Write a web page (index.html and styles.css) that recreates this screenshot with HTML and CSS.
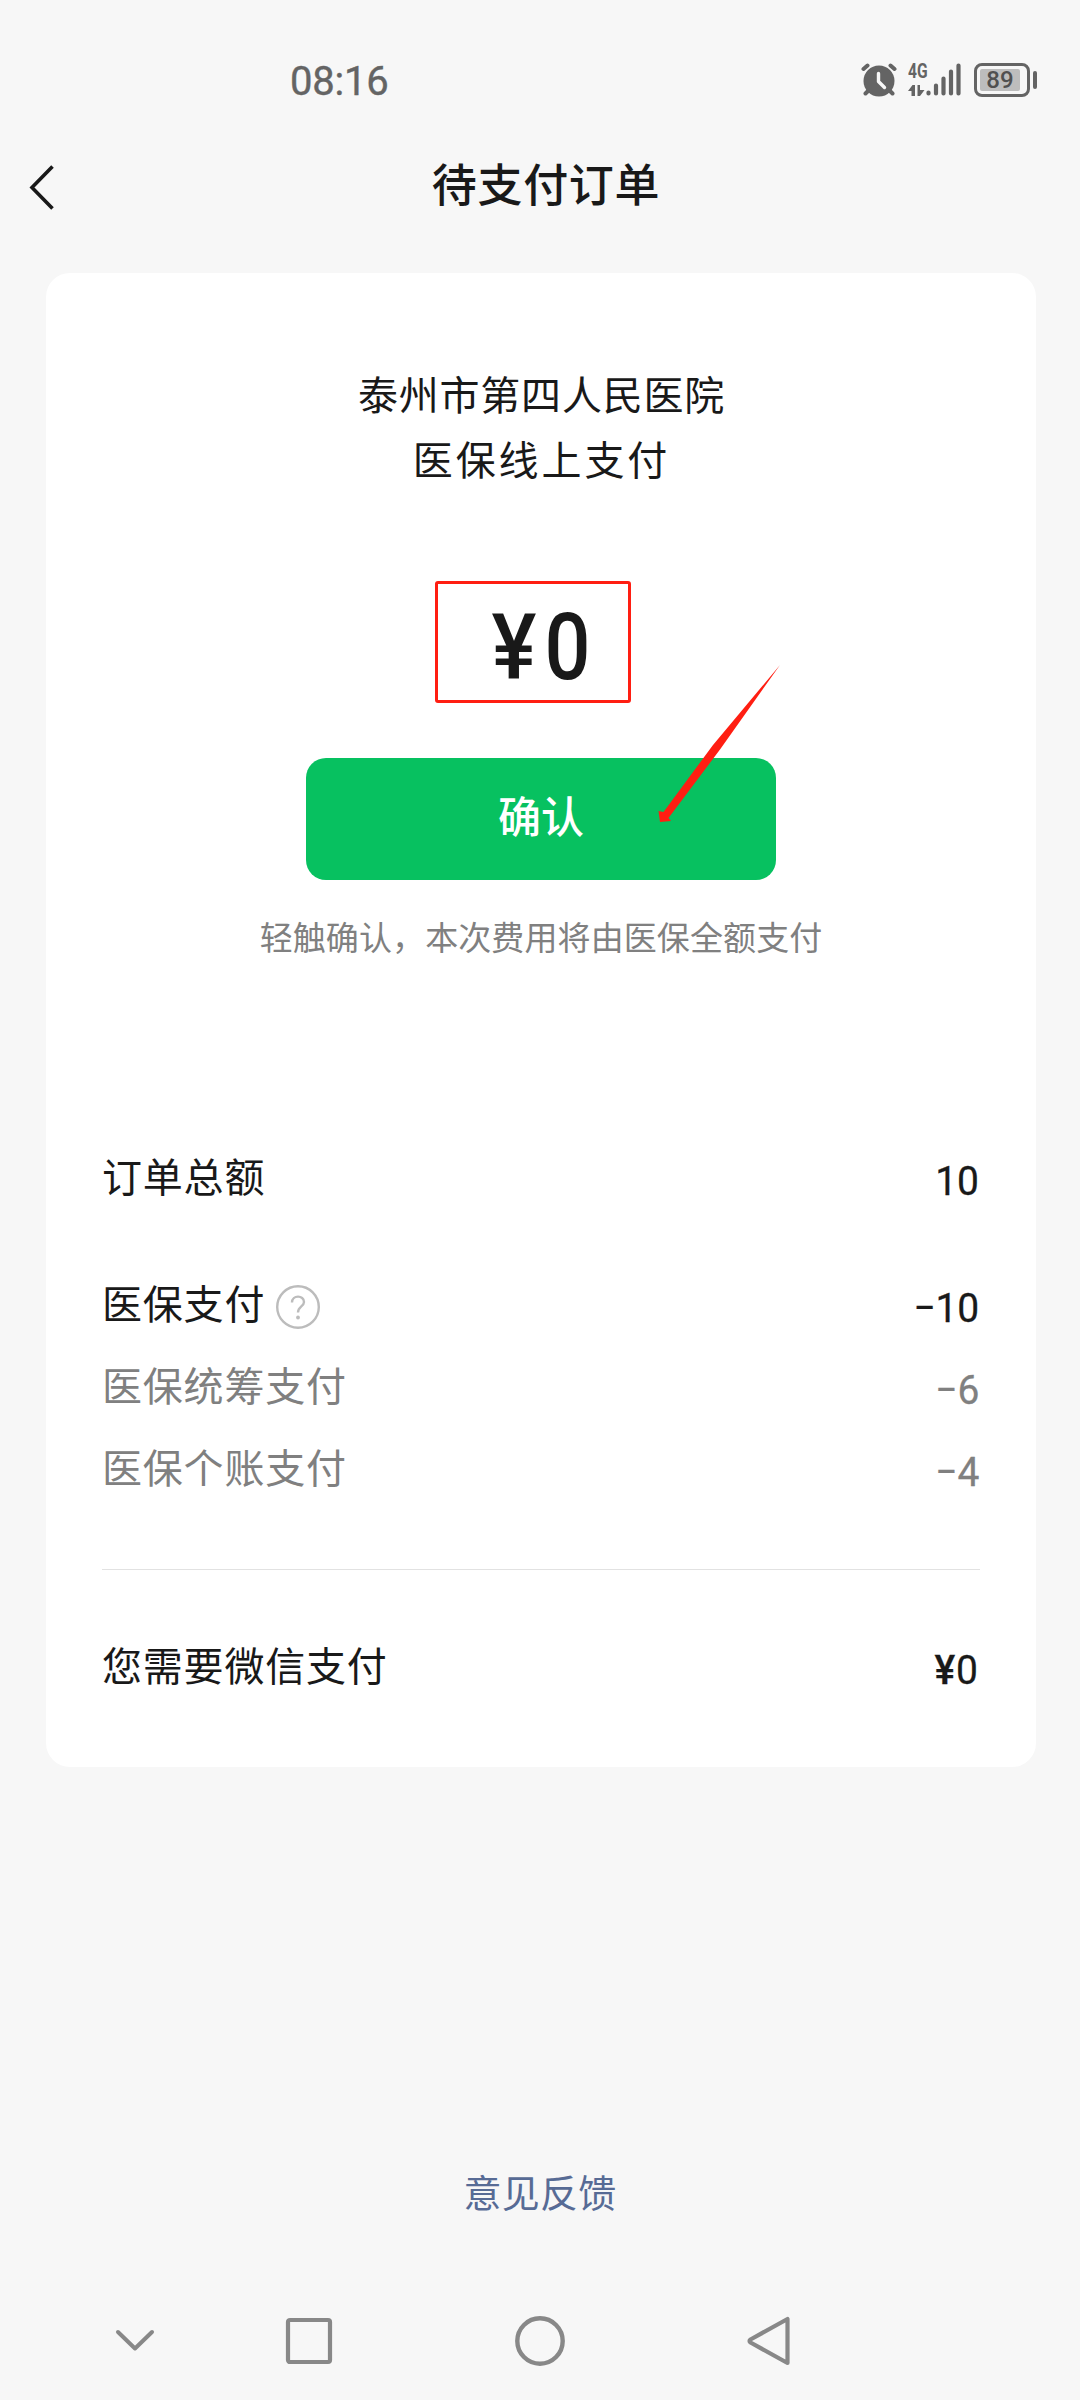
FILE: index.html
```html
<!DOCTYPE html>
<html lang="zh-CN">
<head>
<meta charset="utf-8">
<title>待支付订单</title>
<link rel="stylesheet" href="styles.css">
</head>
<body>
<div class="screen">
  <div class="statusbar">
    <span class="clock">08:16</span>
    <div class="indicators">
      <svg class="alarm" width="36" height="34" viewBox="0 0 36 34">
        <g fill="none" stroke="#646464" stroke-width="4" stroke-linecap="round">
          <path d="M2.500 6 L6.500 2.500M33.500 6 L29.500 2.500M8 27 L4.500 30.500M28 27 L31.500 30.500"/>
        </g>
        <circle cx="18" cy="18" r="15.500" fill="#646464"/>
        <path d="M17.500 10.500 V18.500 L23.500 24.500" fill="none" stroke="#f7f7f7" stroke-width="3.400" stroke-linecap="round" stroke-linejoin="round"/>
      </svg>
      <div class="network">
        <span class="network-type">4G</span>
        <svg width="53" height="34" viewBox="0 0 53 34">
          <g fill="none" stroke="#646464" stroke-width="4.200" stroke-linecap="round">
            <path d="M20.500 29.500V30.500M28 22.500V30.500M35.500 15.500V30.500M43 8.500V30.500M50.500 2.500V30.500"/>
          </g>
          <path d="M0 28 L4.500 22 H7 V33 H3.500 V28Z M9.500 22 H12 V27 H16.500 L12 33 H9.500Z" fill="#646464"/>
        </svg>
      </div>
      <div class="battery"><span class="battery-level">89</span></div>
      <span class="battery-tip"></span>
    </div>
  </div>

  <header class="header">
    <svg class="back" width="28" height="48" viewBox="0 0 28 48">
      <path d="M24.500 3.500 L4 24.500 L24.500 45.500" fill="none" stroke="#191919" stroke-width="3.600"/>
    </svg>
    <h1 class="title">待支付订单</h1>
  </header>

  <main class="card">
    <div class="merchant">泰州市第四人民医院</div>
    <div class="merchant merchant-wide">医保线上支付</div>
    <div class="amount"><span class="yen">¥</span><span class="digits">0</span></div>
    <button class="confirm">确认</button>
    <p class="hint">轻触确认，本次费用将由医保全额支付</p>

    <div class="row row-total"><span>订单总额</span><span class="value">10</span></div>
    <div class="row row-insurance">
      <span class="label">医保支付
        <svg class="help" width="44" height="44" viewBox="0 0 44 44">
          <circle cx="22" cy="22" r="20.800" fill="none" stroke="#bcbcbc" stroke-width="2.400"/>
          <path d="M16 17.500 C16 9.800 28 9.800 28 17 C28 21.500 22 21.500 22 27.500" fill="none" stroke="#bcbcbc" stroke-width="2.400"/>
          <circle cx="22" cy="32.500" r="1.900" fill="#bcbcbc"/>
        </svg>
      </span>
      <span class="value">−10</span>
    </div>
    <div class="row row-sub"><span>医保统筹支付</span><span class="value">−6</span></div>
    <div class="row row-sub"><span>医保个账支付</span><span class="value">−4</span></div>
    <hr class="divider">
    <div class="row row-due"><span>您需要微信支付</span><span class="value value-due"><b>¥</b>0</span></div>
  </main>

  <a class="feedback">意见反馈</a>

  <nav class="navbar">
    <svg width="44" height="56" viewBox="0 0 44 56"><path d="M5 19 L22 35.500 L39 19" fill="none" stroke="#888" stroke-width="4" stroke-linecap="round" stroke-linejoin="round"/></svg>
    <svg width="56" height="56" viewBox="0 0 56 56"><rect x="7" y="7" width="42" height="42" rx="2" fill="none" stroke="#888" stroke-width="4.200"/></svg>
    <svg width="56" height="56" viewBox="0 0 56 56"><circle cx="28" cy="28" r="22.700" fill="none" stroke="#888" stroke-width="4.400"/></svg>
    <svg width="56" height="56" viewBox="0 0 56 56"><path d="M45.500 6 V50 L8.500 29.500 Q6.500 28 8.500 26.500 Z" fill="none" stroke="#888" stroke-width="4.200" stroke-linejoin="round"/></svg>
  </nav>

  <div class="mark-box"></div>
  <svg class="mark-arrow" width="126" height="160" viewBox="0 0 126 160">
    <path d="M122 1 L55 81 L5.500 148 L0.500 147 L2 158 L13 157 L10.500 154 L62 85.500 Z" fill="#ff1e12"/>
  </svg>
</div>
</body>
</html>
```
FILE: styles.css
```css
* { box-sizing: border-box; }

body {
  margin: 0;
  background: #f7f7f7;
  color: #191919;
  font-family: Roboto, "Noto Sans CJK SC", sans-serif;
}

.screen {
  position: relative;
  width: 1080px;
  height: 2400px;
  display: flex;
  flex-direction: column;
}

.statusbar {
  height: 160px;
  padding: 0 43px 0 290px;
  display: flex;
  align-items: center;
  justify-content: space-between;
  color: #646464;
}
.clock { padding-top: 4px; font-size: 40px; line-height: 48px; letter-spacing: -.2px; -webkit-text-stroke: .4px #646464; }
.indicators { display: flex; align-items: center; }
.network { position: relative; height: 34px; margin: 0 13px 0 11px; }
.network svg { display: block; }
.network-type {
  position: absolute;
  left: 0;
  top: -2px;
  font-size: 20px;
  font-weight: 700;
  line-height: 20px;
  transform: scaleX(.78);
  transform-origin: left;
}
.battery {
  width: 56px;
  height: 34px;
  padding: 3px;
  border: 3.500px solid #646464;
  border-radius: 8px;
}
.battery-level {
  display: block;
  width: 40px;
  height: 22px;
  border-radius: 2px;
  background: #bdbdbd;
  color: #505050;
  font-size: 24px;
  font-weight: 500;
  line-height: 23px;
  text-align: center;
}
.battery-tip { width: 4px; height: 18px; margin-left: 3px; border-radius: 2px; background: #646464; }

.header {
  height: 113px;
  padding: 0 28px 60px;
  display: grid;
  grid-template-columns: 28px 1fr 28px;
  align-items: center;
}
.title {
  margin: 0;
  padding-left: 12px;
  text-align: center;
  font-size: 45px;
  font-weight: 500;
  line-height: 48px;
  letter-spacing: .7px;
}

.card {
  width: 990px;
  height: 1494px;
  margin-left: 46px;
  padding: 91px 56px 0;
  border-radius: 24px;
  background: #fff;
}
.merchant {
  padding-left: 1px;
  font-size: 40px;
  line-height: 65px;
  letter-spacing: .800px;
  text-align: center;
}
.merchant-wide { letter-spacing: 2.900px; }
.amount {
  height: 104px;
  margin-top: 100px;
  padding: 2px 0 0 2px;
  display: flex;
  justify-content: center;
  gap: 3px;
  font-size: 93px;
  font-weight: 500;
  line-height: 104px;
}
.yen { font-size: 90px; transform: scaleX(.94); }
.digits { transform: scaleX(.87); }
.confirm {
  display: block;
  width: 470px;
  height: 122px;
  margin: 60px auto 0;
  padding: 0 0 2px;
  border: 0;
  border-radius: 20px;
  background: #07c160;
  color: #fff;
  font: 500 43px/120px Roboto, "Noto Sans CJK SC", sans-serif;
}
.hint {
  height: 48px;
  margin: 36px 0 0;
  color: #808080;
  font-size: 33px;
  line-height: 46px;
  letter-spacing: .100px;
  text-align: center;
  white-space: nowrap;
}

.row {
  height: 60px;
  display: flex;
  align-items: center;
  justify-content: space-between;
  font-size: 40px;
  line-height: 60px;
  letter-spacing: .800px;
}
.label { display: flex; align-items: center; gap: 11px; }
.help { position: relative; top: 1px; }
.value {
  padding: 3px 1px 0 0;
  font-size: 41px;
  letter-spacing: -.200px;
  transform: scaleX(.95);
  transform-origin: right;
  -webkit-text-stroke: .3px currentColor;
}
.value-due { letter-spacing: 1px; }
.value-due b { font-weight: 500; display: inline-block; }
.row-total { margin-top: 185px; }
.row-insurance { margin-top: 67px; }
.row-sub { margin-top: 22px; color: #808080; }
.divider { height: 1px; margin: 69px 0 0; border: 0; background: #e2e2e2; }
.row-due { margin-top: 68px; }

.feedback {
  margin-top: 402px;
  color: #576b95;
  font-size: 38px;
  line-height: 50px;
  letter-spacing: .2px;
  text-align: center;
}

.navbar {
  height: 118px;
  margin-top: 63px;
  padding: 0 280px 0 113px;
  display: grid;
  grid-template-columns: 168px 231px 230px 56px;
  align-items: center;
}

.mark-box {
  position: absolute;
  left: 435px;
  top: 581px;
  width: 196px;
  height: 122px;
  border: 3px solid #ff1e12;
  border-radius: 3px;
}
.mark-arrow { position: absolute; left: 658px; top: 664px; }
```
